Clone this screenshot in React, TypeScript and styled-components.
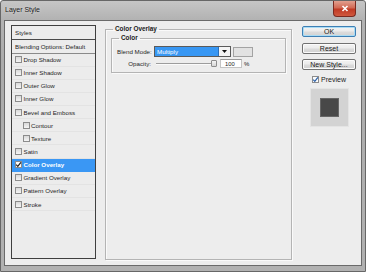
import styled, { createGlobalStyle } from 'styled-components'

// 全域樣式
const GlobalStyle = createGlobalStyle`
  html, body {
    margin: 0;
    padding: 0;
    overflow: hidden;
    background: #ffffff;
  }
  * {
    box-sizing: border-box;
  }
`

const styleItems = [
  { label: 'Drop Shadow' },
  { label: 'Inner Shadow' },
  { label: 'Outer Glow' },
  { label: 'Inner Glow' },
  { label: 'Bevel and Emboss' },
  { label: 'Contour', indent: true },
  { label: 'Texture', indent: true },
  { label: 'Satin' },
  { label: 'Color Overlay', checked: true, active: true },
  { label: 'Gradient Overlay' },
  { label: 'Pattern Overlay' },
  { label: 'Stroke' },
]

// 勾選框
const CheckBox = ({ checked, tone = '#1d1d1d' }: { checked?: boolean; tone?: string }) => (
  <StyledCheck $checked={checked}>
    {checked && (
      <svg width="7" height="7" viewBox="0 0 7 7">
        <path d="M1.2 3.6 L2.8 5.3 L5.9 1.3" fill="none" stroke={tone} strokeWidth="1.2" />
      </svg>
    )}
  </StyledCheck>
)

// UI元件
const App = () => {
  return (
    <>
      <GlobalStyle />
      <Window>
        <TitleBar>
          <Title>Layer Style</Title>
          <CloseButton>
            <svg width="8" height="7" viewBox="0 0 8 7">
              <path d="M1.5 1 L6.5 6 M6.5 1 L1.5 6" stroke="#fff" strokeWidth="1.6" />
            </svg>
          </CloseButton>
        </TitleBar>
        <Body>
          <StyleList>
            <HeadRow>Styles</HeadRow>
            <HeadRow $tall>Blending Options: Default</HeadRow>
            {styleItems.map((item) => (
              <ItemRow key={item.label} $indent={item.indent} $active={item.active}>
                <CheckBox checked={item.checked} />
                <span>{item.label}</span>
              </ItemRow>
            ))}
          </StyleList>

          <Group $main>
            <Legend>Color Overlay</Legend>
            <Group>
              <Legend>Color</Legend>
              <FieldRow>
                <FieldLabel>Blend Mode:</FieldLabel>
                <Select>
                  <SelectValue>Multiply</SelectValue>
                  <SelectArrow>
                    <svg width="5" height="3" viewBox="0 0 5 3">
                      <path d="M0 0 H5 L2.5 3 Z" fill="#111" />
                    </svg>
                  </SelectArrow>
                </Select>
                <ColorSwatch />
              </FieldRow>
              <FieldRow $gap>
                <FieldLabel>Opacity:</FieldLabel>
                <Slider>
                  <SliderThumb style={{ left: `${(100 / 100) * 55}px` }} />
                </Slider>
                <NumberBox>100</NumberBox>
                <Unit>%</Unit>
              </FieldRow>
            </Group>
          </Group>

          <SideColumn>
            <DialogButton $primary>OK</DialogButton>
            <DialogButton>Reset</DialogButton>
            <DialogButton>New Style...</DialogButton>
            <PreviewToggle>
              <CheckBox checked tone="#2a5fa8" />
              <span>Preview</span>
            </PreviewToggle>
            <PreviewFrame>
              <PreviewSquare />
            </PreviewFrame>
          </SideColumn>
        </Body>
      </Window>
    </>
  )
}

// UI元件樣式
const Window = styled.div`
  width: 366px;
  height: 272px;
  display: flex;
  flex-direction: column;
  border: 1px solid #676767;
  border-radius: 3px 3px 0 0;
  padding: 0 3px 5px 3px;
  background: linear-gradient(180deg, #c6c6c6 0px, #b3b3b3 18px, #ababab 60px, #b1b1b1 100%);
  font-family: 'Liberation Sans', Arial, sans-serif;
  color: #1e1e1e;
`

const TitleBar = styled.div`
  height: 20px;
  display: flex;
  align-items: flex-start;
  justify-content: space-between;
  padding-left: 1px;
`

const Title = styled.span`
  font-size: 7px;
  line-height: 7px;
  margin-top: 5px;
  color: #1b1b1b;
  text-shadow: 0 0 3px rgba(255, 255, 255, 0.7);
`

const CloseButton = styled.div`
  width: 23px;
  height: 16px;
  margin-right: 6px;
  display: flex;
  align-items: center;
  justify-content: center;
  border: 1px solid #7a2a20;
  border-top: none;
  border-radius: 0 0 4px 4px;
  background: linear-gradient(180deg, #e2a08f 0%, #d26a55 45%, #c03a24 55%, #d0593f 100%);
`

const Body = styled.div`
  flex: 1;
  display: flex;
  align-items: flex-start;
  border: 1px solid #6a6a6a;
  background: #ededed;
  padding: 4px 5px 5px 6px;
`

const StyleList = styled.div`
  width: 85px;
  height: 234px;
  flex-shrink: 0;
  border: 1px solid #3f3f3f;
  background: #ececec;
  font-size: 6.2px;
`

const HeadRow = styled.div<{ $tall?: boolean }>`
  height: ${(p) => (p.$tall ? 13.5 : 14)}px;
  display: flex;
  align-items: center;
  padding-left: 3px;
  border-bottom: 1px solid ${(p) => (p.$tall ? '#8a8a8a' : '#4a4a4a')};
  color: #1c1c1c;
  white-space: nowrap;
`

const ItemRow = styled.div<{ $indent?: boolean; $active?: boolean }>`
  height: 13.15px;
  display: flex;
  align-items: center;
  gap: 1.5px;
  padding-left: ${(p) => (p.$indent ? 10.5 : 3)}px;
  border-bottom: 1px solid ${(p) => (p.$active ? '#3a97f4' : '#e3e3e3')};
  background: ${(p) => (p.$active ? '#3a97f4' : 'transparent')};
  color: ${(p) => (p.$active ? '#ffffff' : '#1f1f1f')};
  font-weight: ${(p) => (p.$active ? 700 : 400)};
  white-space: nowrap;
`

const StyledCheck = styled.span<{ $checked?: boolean }>`
  width: 7px;
  height: 7px;
  flex-shrink: 0;
  display: flex;
  border: 1px solid #8c8c8c;
  background: ${(p) => (p.$checked ? '#fbfbfb' : 'linear-gradient(180deg, #d9d9d9, #f5f5f5)')};
  svg {
    margin: -1px;
  }
`

const Group = styled.fieldset<{ $main?: boolean }>`
  margin: ${(p) => (p.$main ? '0 0 0 9px' : '1px 0 0 0')};
  width: ${(p) => (p.$main ? '187px' : '175px')};
  height: ${(p) => (p.$main ? '235px' : '39px')};
  flex-shrink: 0;
  min-width: 0;
  padding: ${(p) => (p.$main ? '0 5px' : '4px 5px 3px 5px')};
  border: 1px solid #b4b4b4;
  box-shadow: 1px 1px 0 #fafafa, inset 1px 1px 0 #fafafa;
  font-size: 6.2px;
`

const Legend = styled.legend`
  margin-left: 2px;
  padding: 0 2px;
  font-size: 6.4px;
  line-height: 8px;
  font-weight: 700;
  color: #1a1a1a;
`

const FieldRow = styled.div<{ $gap?: boolean }>`
  height: 11px;
  margin-top: ${(p) => (p.$gap ? 1 : 0)}px;
  display: flex;
  align-items: center;
`

const FieldLabel = styled.span`
  width: 34px;
  flex-shrink: 0;
  text-align: right;
  margin-right: 3px;
  color: #1f1f1f;
  white-space: nowrap;
`

const Select = styled.div`
  width: 77px;
  height: 11px;
  display: flex;
  border: 1px solid #5a5a5a;
  background: #f4f4f4;
`

const SelectValue = styled.span`
  flex: 1;
  margin: 0;
  padding-left: 2px;
  display: flex;
  align-items: center;
  background: #3897f3;
  border-right: 1px solid #2a6fb8;
  color: #ffffff;
`

const SelectArrow = styled.span`
  width: 11px;
  display: flex;
  align-items: center;
  justify-content: center;
`

const ColorSwatch = styled.span`
  width: 20px;
  height: 10px;
  margin-left: 2px;
  border: 1px solid #a3a3a3;
  background: #e2e2e2;
`

const Slider = styled.div`
  position: relative;
  width: 62px;
  height: 9px;
  margin-left: 2px;
  &::before {
    content: '';
    position: absolute;
    left: 0;
    right: 4px;
    top: 4px;
    height: 1px;
    background: #9d9d9d;
    box-shadow: 0 1px 0 #fbfbfb;
  }
`

const SliderThumb = styled.span`
  position: absolute;
  top: 1px;
  width: 6px;
  height: 7px;
  border: 1px solid #8d8d8d;
  border-radius: 1px;
  background: linear-gradient(180deg, #f4f4f4, #d6d6d6);
`

const NumberBox = styled.span`
  width: 22px;
  height: 9px;
  margin-left: 2px;
  padding-left: 4px;
  display: flex;
  align-items: center;
  border: 1px solid #c4c4c4;
  border-top-color: #9a9a9a;
  background: #ffffff;
  font-size: 5.8px;
`

const Unit = styled.span`
  margin-left: 2px;
  font-size: 6px;
`

const SideColumn = styled.div`
  width: 54px;
  margin: 1px 0 0 10px;
  display: flex;
  flex-direction: column;
  align-items: center;
`

const DialogButton = styled.button<{ $primary?: boolean }>`
  width: 54px;
  height: 11px;
  margin: 0 0 5.5px 0;
  padding: 0;
  border: 1px solid ${(p) => (p.$primary ? '#3d7fb4' : '#717171')};
  border-radius: 2px;
  background: linear-gradient(180deg, #f3f3f3 0%, #ebebeb 48%, #dcdcdc 52%, #d2d2d2 100%);
  box-shadow: ${(p) => (p.$primary ? 'inset 0 0 0 1px #a9dcf5' : 'inset 0 0 0 1px #fbfbfb')};
  font-family: 'Liberation Sans', Arial, sans-serif;
  font-size: 7px;
  line-height: 9px;
  color: #1b1b1b;
`

const PreviewToggle = styled.label`
  height: 9px;
  margin-top: -0.5px;
  display: flex;
  align-items: center;
  gap: 2px;
  font-size: 7px;
  color: #1b1b1b;
`

const PreviewFrame = styled.div`
  width: 39px;
  height: 39px;
  margin-top: 4px;
  display: flex;
  align-items: center;
  justify-content: center;
  border: 1px solid #e4e4e4;
  background: #d3d3d3;
`

const PreviewSquare = styled.div`
  width: 19px;
  height: 19px;
  border: 1px solid #666666;
  background: #484848;
`

export default App
